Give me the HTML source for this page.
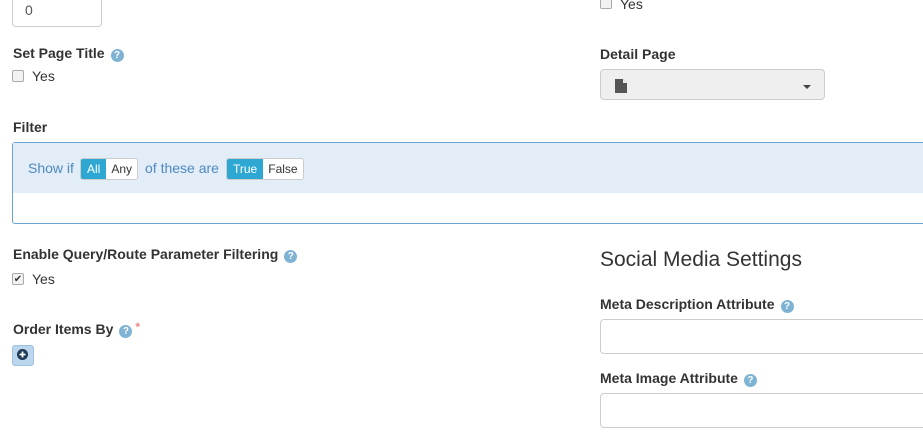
<!DOCTYPE html>
<html><head><style>
body{margin:0;width:923px;height:446px;overflow:hidden;background:#fff;font-family:"Liberation Sans",Arial,sans-serif;font-size:14px;color:#333;position:relative}
.a{position:absolute}
.lbl{font-weight:bold;font-size:14px;color:#333;line-height:16px}
.help{display:inline-block;width:13px;height:13px;border-radius:50%;background:#7fb3d3;color:#fff;font-size:10px;line-height:13px;text-align:center;font-weight:bold;vertical-align:0px;margin-left:6px}
.cb{width:12px;height:12px;border:1px solid #aaa;border-radius:2px;background:#f2f2f2;box-sizing:border-box}
.inp{border:1px solid #ccc;border-radius:4px;background:#fff}
.bg{display:inline-flex;border:1px solid #ccc;border-radius:3px;overflow:hidden;font-size:12px;height:20px;line-height:20px}
.bg span{padding:0 5px;background:#fff;color:#333}
.bg span.on{background:#2ea8d2;color:#fff;padding:0 6px}
</style></head><body>
<div class="a inp" style="left:12px;top:-8px;width:88px;height:33px"></div>
<div class="a" style="left:25px;top:2px;font-size:14px;color:#555">0</div>

<div class="a lbl" style="left:13px;top:45px">Set Page Title<span class="help">?</span></div>
<div class="a cb" style="left:12px;top:70px"></div>
<div class="a" style="left:32px;top:68px">Yes</div>

<div class="a cb" style="left:600px;top:-3px"></div>
<div class="a" style="left:620px;top:-4px">Yes</div>
<div class="a lbl" style="left:600px;top:46px">Detail Page</div>
<div class="a" style="left:600px;top:69px;width:223px;height:29px;border:1px solid #ccc;border-radius:4px;background:#efefef"></div>
<svg class="a" style="left:615px;top:79px" width="12" height="14" viewBox="0 0 12 14"><path d="M0 0H8L12 4V14H0Z" fill="#555"/><path d="M8 0V4H12" fill="#eee"/></svg>
<div class="a" style="left:803px;top:85px;width:0;height:0;border-left:4px solid transparent;border-right:4px solid transparent;border-top:4px solid #444"></div>

<div class="a lbl" style="left:13px;top:119px">Filter</div>
<div class="a" style="left:12px;top:142px;width:920px;height:80px;border:1px solid #6aa3d5;border-radius:3px;background:#fff"></div>
<div class="a" style="left:13px;top:143px;width:920px;height:50px;background:#e2edf7"></div>
<div class="a" style="left:28px;top:160px;color:#4d8ac0;font-size:14px">Show if</div>
<div class="a bg" style="left:80px;top:158px"><span class="on">All</span><span>Any</span></div>
<div class="a" style="left:145px;top:160px;color:#4d8ac0;font-size:14px">of these are</div>
<div class="a bg" style="left:226px;top:158px"><span class="on">True</span><span>False</span></div>

<div class="a lbl" style="left:13px;top:246px">Enable Query/Route Parameter Filtering<span class="help">?</span></div>
<div class="a cb" style="left:12px;top:273px;font-size:10px;line-height:11px;text-align:center">✔</div>
<div class="a" style="left:32px;top:271px">Yes</div>

<div class="a lbl" style="left:13px;top:319px">Order Items By<span class="help">?</span><span style="color:#e88;margin-left:3px;font-size:12px;vertical-align:3px">*</span></div>
<div class="a" style="left:12px;top:345px;width:20px;height:19px;background:#bcd6ee;border:1px solid #9fc1e2;border-radius:3px"></div>
<svg class="a" style="left:17px;top:349px" width="11" height="11" viewBox="0 0 11 11"><circle cx="5.5" cy="5.5" r="5.5" fill="#1d3a57"/><path d="M5.5 2.5V8.5M2.5 5.5H8.5" stroke="#fff" stroke-width="1.8"/></svg>

<div class="a" style="left:600px;top:248px;font-size:21px;color:#333">Social Media Settings</div>
<div class="a lbl" style="left:600px;top:296px">Meta Description Attribute<span class="help">?</span></div>
<div class="a inp" style="left:600px;top:319px;width:340px;height:33px"></div>
<div class="a lbl" style="left:600px;top:370px">Meta Image Attribute<span class="help">?</span></div>
<div class="a inp" style="left:600px;top:393px;width:340px;height:33px"></div>
</body></html>
